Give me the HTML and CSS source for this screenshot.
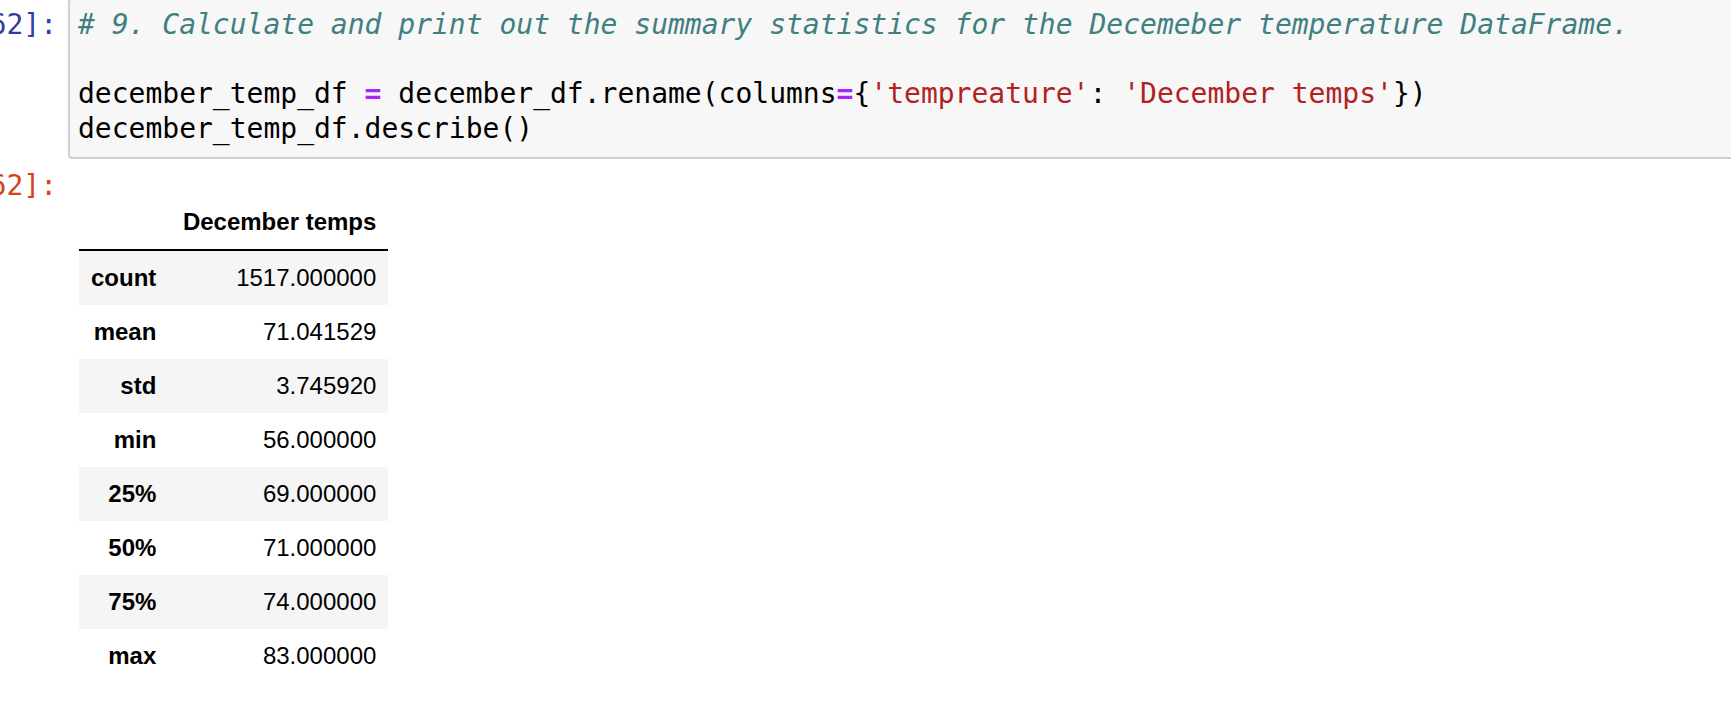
FILE: index.html
```html
<!DOCTYPE html>
<html>
<head>
<meta charset="utf-8">
<link rel="stylesheet" href="styles.css">
</head>
<body>
<div class="cell">
  <div class="input">
    <div class="prompt prompt-in"><span>[62]:</span></div>
    <div class="editor"><pre class="code"><span class="c-comment"># 9. Calculate and print out the summary statistics for the Decemeber temperature DataFrame.</span>

december_temp_df <span class="c-op">=</span> december_df.rename(columns<span class="c-op">=</span>{<span class="c-str">'tempreature'</span>: <span class="c-str">'December temps'</span>})
december_temp_df.describe()</pre></div>
  </div>
  <div class="output">
    <div class="prompt prompt-out"><span>[62]:</span></div>
    <div class="output-sub">
      <table class="df">
        <thead>
          <tr><th></th><th>December temps</th></tr>
        </thead>
        <tbody>
          <tr><th>count</th><td>1517.000000</td></tr>
          <tr><th>mean</th><td>71.041529</td></tr>
          <tr><th>std</th><td>3.745920</td></tr>
          <tr><th>min</th><td>56.000000</td></tr>
          <tr><th>25%</th><td>69.000000</td></tr>
          <tr><th>50%</th><td>71.000000</td></tr>
          <tr><th>75%</th><td>74.000000</td></tr>
          <tr><th>max</th><td>83.000000</td></tr>
        </tbody>
      </table>
    </div>
  </div>
</div>
</body>
</html>
```
FILE: styles.css
```css
html, body {
  margin: 0;
  padding: 0;
  background: #ffffff;
  overflow: hidden;
}

.cell {
  display: flex;
  flex-direction: column;
}

.input {
  display: flex;
  margin-top: -2px;
}

.output {
  display: flex;
}

.prompt {
  flex: none;
  width: 57px;
  padding: 10px 11px 0 0;
  display: flex;
  justify-content: flex-end;
  font-family: "DejaVu Sans Mono", monospace;
  font-size: 28px;
  line-height: 34.5px;
  white-space: nowrap;
}

.prompt-in {
  color: #303F9F;
}

.prompt-out {
  color: #D84315;
  padding-top: 10px;
}

.editor {
  flex: 1;
  margin-right: -10px;
  background: #f7f7f7;
  border: 2px solid #cfcfcf;
  border-radius: 4px;
  padding: 8px 8px 11px 8px;
}

.code {
  margin: 0;
  font-family: "DejaVu Sans Mono", monospace;
  font-size: 28px;
  line-height: 34.5px;
  color: #000000;
  white-space: pre;
}

.c-comment {
  color: #408080;
  font-style: italic;
}

.c-op {
  color: #AA22FF;
  font-weight: bold;
}

.c-str {
  color: #B22222;
}

.output-sub {
  padding: 11px 0 0 11px;
}

.df {
  margin-top: 25px;
  border-collapse: collapse;
  border-spacing: 0;
  font-family: "Liberation Sans", Arial, sans-serif;
  font-size: 24px;
  line-height: 30px;
  color: #000000;
}

.df th,
.df td {
  padding: 12px;
  text-align: right;
  vertical-align: middle;
  white-space: nowrap;
}

.df td {
  width: 196px;
}

.df thead th {
  font-weight: bold;
  vertical-align: bottom;
  border-bottom: 2px solid #000000;
}

.df tbody th {
  font-weight: bold;
}

.df tbody tr:nth-child(odd) {
  background: #f5f5f5;
}
```
